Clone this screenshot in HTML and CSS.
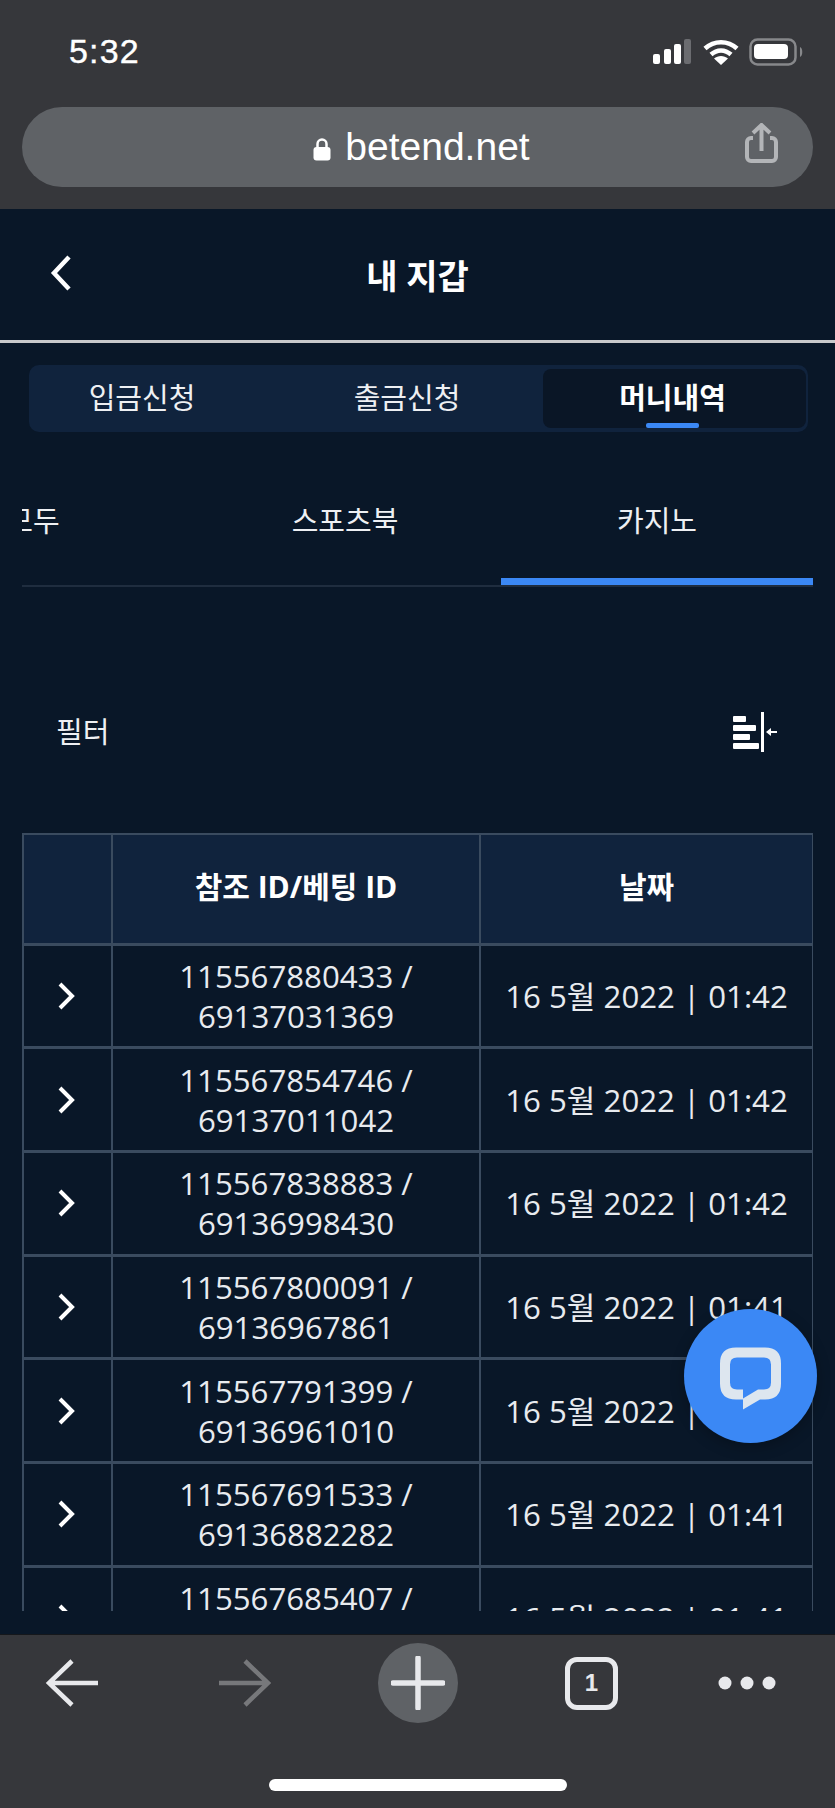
FILE: index.html
```html
<!DOCTYPE html>
<html lang="ko">
<head>
  <meta charset="UTF-8">
  <meta name="viewport" content="width=device-width, initial-scale=1.0">
  <title>내 지갑</title>
  <link rel="stylesheet" href="styles.css">
</head>
<body>
  <div id="phone">
    <div class="browser-top">
      <div class="status-bar">
        <span class="time">5:32</span>
        <div class="status-icons">
          <svg width="40" height="26" viewBox="0 0 40 26">
            <rect x="0" y="15" width="7" height="10" rx="2" fill="#fff"/>
            <rect x="11" y="10" width="7" height="15" rx="2" fill="#fff"/>
            <rect x="21" y="5" width="7" height="20" rx="2" fill="#fff"/>
            <rect x="31" y="0" width="7" height="25" rx="2" fill="#6b6c70"/>
          </svg>
          <svg width="36" height="26" viewBox="0 0 36 26">
            <path d="M2 9.5C11 1 25 1 34 9.5" fill="none" stroke="#fff" stroke-width="4.5"/>
            <path d="M8 15.5C14 10 22 10 28 15.5" fill="none" stroke="#fff" stroke-width="4.5"/>
            <path d="M18 26L11 19.5C15 16 21 16 25 19.5Z" fill="#fff"/>
          </svg>
          <svg width="56" height="28" viewBox="0 0 56 28">
            <rect x="1.5" y="1.5" width="45" height="25" rx="7" fill="none" stroke="#87888b" stroke-width="2.5"/>
            <rect x="5" y="6" width="34" height="15" rx="4" fill="#fff"/>
            <path d="M51 9C54 10 54 18 51 19Z" fill="#87888b"/>
          </svg>
        </div>
      </div>
      <div class="url-pill">
        <div class="url-text">
          <svg width="18" height="24" viewBox="0 0 18 24">
            <path d="M4.5 11V7a4.500 4.500 0 0 1 9 0v4" fill="none" stroke="#fff" stroke-width="2.500"/>
            <rect x="0.500" y="10" width="17" height="13.500" rx="3" fill="#fff"/>
          </svg>
          <span>betend.net</span>
        </div>
        <svg class="share" width="33" height="40" viewBox="0 0 33 40">
          <path d="M8 15H6a4 4 0 0 0-4 4v15a4 4 0 0 0 4 4h21a4 4 0 0 0 4-4V19a4 4 0 0 0-4-4h-2" fill="none" stroke="#b3b5b8" stroke-width="4"/>
          <path d="M16.500 28V3M8 10l8.500-8 8.500 8" fill="none" stroke="#b3b5b8" stroke-width="4"/>
        </svg>
      </div>
    </div>

    <div class="page">
      <div class="page-header">
        <svg class="back" width="22" height="36" viewBox="0 0 22 36">
          <path d="M19 2L4 18l15 16" fill="none" stroke="#fff" stroke-width="4.500"/>
        </svg>
        <h1>내 지갑</h1>
      </div>

      <div class="wallet-tabs">
        <div class="wallet-tab first">입금신청</div>
        <div class="wallet-tab second">출금신청</div>
        <div class="wallet-tab active">머니내역</div>
      </div>

      <div class="sub-tabs">
        <div class="sub-tabs-inner">
          <div class="sub-tab">모두</div>
          <div class="sub-tab">스포츠북</div>
          <div class="sub-tab active">카지노</div>
        </div>
      </div>

      <div class="filter-row">
        <span>필터</span>
        <svg class="filter-icon" width="44" height="40" viewBox="0 0 44 40">
          <rect x="0" y="4" width="13" height="6" rx="1" fill="#fff"/>
          <rect x="0" y="13" width="23" height="6" rx="1" fill="#fff"/>
          <rect x="0" y="22" width="17" height="6" rx="1" fill="#fff"/>
          <rect x="0" y="31" width="26" height="6" rx="1" fill="#fff"/>
          <rect x="28" y="0" width="3" height="40" fill="#fff"/>
          <path d="M44 20H37" stroke="#fff" stroke-width="2"/>
          <path d="M33 20l5-4v8z" fill="#fff"/>
        </svg>
      </div>

      <div class="table-wrap">
        <table class="bets">
          <thead>
            <tr>
              <th class="col-arrow"></th>
              <th class="col-id">참조 ID/베팅 ID</th>
              <th class="col-date">날짜</th>
            </tr>
          </thead>
          <tbody>
            <tr>
              <td><svg class="chev" width="18" height="28" viewBox="0 0 18 28"><path d="M3 2l12 12L3 26" fill="none" stroke="#fff" stroke-width="4"/></svg></td>
              <td>115567880433 /<br>69137031369</td>
              <td>16 5월 2022 | 01:42</td>
            </tr>
            <tr>
              <td><svg class="chev" width="18" height="28" viewBox="0 0 18 28"><path d="M3 2l12 12L3 26" fill="none" stroke="#fff" stroke-width="4"/></svg></td>
              <td>115567854746 /<br>69137011042</td>
              <td>16 5월 2022 | 01:42</td>
            </tr>
            <tr>
              <td><svg class="chev" width="18" height="28" viewBox="0 0 18 28"><path d="M3 2l12 12L3 26" fill="none" stroke="#fff" stroke-width="4"/></svg></td>
              <td>115567838883 /<br>69136998430</td>
              <td>16 5월 2022 | 01:42</td>
            </tr>
            <tr>
              <td><svg class="chev" width="18" height="28" viewBox="0 0 18 28"><path d="M3 2l12 12L3 26" fill="none" stroke="#fff" stroke-width="4"/></svg></td>
              <td>115567800091 /<br>69136967861</td>
              <td>16 5월 2022 | 01:41</td>
            </tr>
            <tr>
              <td><svg class="chev" width="18" height="28" viewBox="0 0 18 28"><path d="M3 2l12 12L3 26" fill="none" stroke="#fff" stroke-width="4"/></svg></td>
              <td>115567791399 /<br>69136961010</td>
              <td>16 5월 2022 | 01:41</td>
            </tr>
            <tr>
              <td><svg class="chev" width="18" height="28" viewBox="0 0 18 28"><path d="M3 2l12 12L3 26" fill="none" stroke="#fff" stroke-width="4"/></svg></td>
              <td>115567691533 /<br>69136882282</td>
              <td>16 5월 2022 | 01:41</td>
            </tr>
            <tr>
              <td><svg class="chev" width="18" height="28" viewBox="0 0 18 28"><path d="M3 2l12 12L3 26" fill="none" stroke="#fff" stroke-width="4"/></svg></td>
              <td>115567685407 /<br>69136877590</td>
              <td>16 5월 2022 | 01:41</td>
            </tr>
          </tbody>
        </table>
      </div>

      <div class="chat-fab">
        <svg width="133" height="133" viewBox="0 0 133 132">
          <path fill-rule="evenodd" fill="#dde6ef" d="M52 38H81Q97 38 97 54V74Q97 90 81 90H76L59 100V90H52Q36 90 36 74V54Q36 38 52 38ZM53 48Q46 48 46 55V73Q46 80 53 80H59V89L74 80H80Q87 80 87 73V55Q87 48 80 48Z"/>
        </svg>
      </div>
    </div>

    <div class="browser-bottom">
      <div class="toolbar">
        <svg width="54" height="48" viewBox="0 0 54 48">
          <path d="M53 24H4M27 2L4 24l23 22" fill="none" stroke="#e8e9ec" stroke-width="4.500"/>
        </svg>
        <svg class="tool-forward" width="54" height="48" viewBox="0 0 54 48">
          <path d="M1 24H50M27 2l23 22-23 22" fill="none" stroke="#77787b" stroke-width="4.500"/>
        </svg>
        <div class="plus-btn">
          <svg width="54" height="54" viewBox="0 0 54 54">
            <path d="M27 2V52M2 27H52" fill="none" stroke="#e8e9ec" stroke-width="5.500" stroke-linecap="round"/>
          </svg>
        </div>
        <div class="tab-count">1</div>
        <svg class="tool-more" width="58" height="14" viewBox="0 0 58 14">
          <circle cx="7" cy="7" r="6.500" fill="#e8e9ec"/>
          <circle cx="29" cy="7" r="6.500" fill="#e8e9ec"/>
          <circle cx="51" cy="7" r="6.500" fill="#e8e9ec"/>
        </svg>
      </div>
      <div class="home-bar"></div>
    </div>
  </div>
</body>
</html>
```

FILE: styles.css
```css
* {
  box-sizing: border-box;
}

body {
  margin: 0;
  background-color: #091728;
  color: #fff;
  font-family: 'Open Sans', 'Noto Sans CJK KR', sans-serif;
}

#phone {
  width: 835px;
  height: 1808px;
  display: flex;
  flex-direction: column;
  overflow: hidden;
}

/* browser chrome */
.browser-top {
  height: 209px;
  background-color: #36373b;
  padding: 0 22px;
}

.status-bar {
  height: 107px;
  display: flex;
  justify-content: space-between;
  align-items: flex-start;
  padding: 32px 0 0 47px;
}

.time {
  font-family: 'Liberation Sans', sans-serif;
  font-size: 34px;
  line-height: 38px;
  font-weight: 400;
  letter-spacing: 1.2px;
  -webkit-text-stroke: 0.4px #fff;
}

.status-icons {
  display: flex;
  align-items: center;
  gap: 10px;
  margin-right: 8px;
  padding-top: 6px;
}

.url-pill {
  position: relative;
  height: 80px;
  border-radius: 40px;
  background-color: #5f6266;
  display: flex;
  justify-content: center;
  align-items: center;
}

.url-text {
  display: flex;
  align-items: center;
  gap: 14px;
  padding-left: 8px;
  font-family: 'Liberation Sans', sans-serif;
  font-size: 39px;
}

.url-text svg {
  margin-top: 4px;
}

.share {
  position: absolute;
  right: 35px;
  top: 16px;
}

/* page */
.page {
  position: relative;
  flex: 1;
  background-color: #091728;
}

.page-header {
  height: 134px;
  border-bottom: 3px solid #c8c9cb;
  display: flex;
  justify-content: center;
  align-items: center;
  position: relative;
}

.page-header h1 {
  margin: 0;
  padding-bottom: 1px;
  font-size: 34px;
  font-weight: 700;
}

.back {
  position: absolute;
  left: 50px;
  top: 46px;
}

.wallet-tabs {
  display: flex;
  margin: 22px 27px 0 29px;
  height: 67px;
  padding: 4px 2px 4px 0;
  background-color: #10233d;
  border-radius: 10px;
}

.wallet-tab {
  display: flex;
  justify-content: center;
  align-items: center;
  font-size: 29px;
  padding-bottom: 6px;
  color: #eef0f3;
}

.wallet-tab.first {
  flex: 0 0 226px;
}

.wallet-tab.second {
  flex: 1;
  padding-left: 16px;
}

.wallet-tab.active {
  position: relative;
  flex: 0 0 263px;
  padding-right: 4px;
  background-color: #0a1626;
  border-radius: 8px;
  font-weight: 700;
  color: #fff;
}

.wallet-tab.active::after {
  content: '';
  position: absolute;
  left: 103px;
  bottom: 0;
  width: 53px;
  height: 5px;
  border-radius: 2px;
  background-color: #3b88f5;
}

.sub-tabs {
  margin: 0 22px;
  height: 155px;
  overflow: hidden;
  border-bottom: 2px solid #1f2d3f;
}

.sub-tabs-inner {
  display: flex;
  margin-left: -145px;
  height: 153px;
}

.sub-tab {
  flex: 0 0 312px;
  padding-top: 64px;
  text-align: center;
  font-size: 29px;
  line-height: 50px;
  color: #eef0f3;
}

.sub-tab.active {
  border-bottom: 7px solid #3b88f5;
}

.filter-row {
  margin: 0 58px 0 56px;
  height: 246px;
  padding-top: 124px;
  display: flex;
  justify-content: space-between;
  align-items: flex-start;
  font-size: 29px;
  line-height: 42px;
  color: #eef0f3;
}

.filter-icon {
  margin-top: 1px;
}

.table-wrap {
  margin: 0 22px;
  height: 778px;
  overflow: hidden;
}

.bets {
  width: 790px;
  table-layout: fixed;
  border-collapse: collapse;
  text-align: center;
  font-size: 31.2px;
  font-weight: 400;
  line-height: 40px;
}

.bets th,
.bets td {
  border-style: solid;
  border-color: #3a4b5f;
  border-width: 3px 2.5px;
  padding: 0;
}

.bets th {
  height: 110px;
  border-width: 2px;
  background-color: #10233d;
  font-size: 30px;
  font-weight: 700;
  padding-bottom: 4px;
}

.bets td {
  height: 103.7px;
  color: #e8ebef;
}

.col-arrow {
  width: 89px;
}

.col-id {
  width: 368px;
}

.col-date {
  width: 333px;
}

.chev {
  display: block;
  margin: 0 auto;
  position: relative;
  left: -2px;
}

.chat-fab {
  position: absolute;
  left: 684px;
  top: 1100px;
  width: 133px;
  height: 134px;
  border-radius: 50%;
  background-color: #3b88f5;
  box-shadow: 0 4px 14px rgba(0, 0, 0, 0.25);
}

.chat-fab svg {
  display: block;
}

/* bottom bar */
.browser-bottom {
  height: 174px;
  flex: none;
  background-color: #36373b;
  border-top: 1px solid #15171b;
  position: relative;
}

.toolbar {
  display: flex;
  align-items: center;
  height: 80px;
  margin-top: 8px;
  padding-left: 45px;
}

.tool-forward {
  margin-left: 119px;
}

.plus-btn {
  margin-left: 106px;
  width: 80px;
  height: 80px;
  border-radius: 50%;
  background-color: #5f6266;
  display: flex;
  justify-content: center;
  align-items: center;
}

.tab-count {
  margin-left: 107px;
  width: 53px;
  height: 53px;
  border: 5px solid #e8e9ec;
  border-radius: 12px;
  display: flex;
  justify-content: center;
  align-items: center;
  font-family: 'Liberation Sans', sans-serif;
  font-size: 24px;
  font-weight: 700;
  color: #e8e9ec;
}

.tool-more {
  margin-left: 100px;
}

.home-bar {
  position: absolute;
  left: 269px;
  top: 144px;
  width: 298px;
  height: 12px;
  border-radius: 6px;
  background-color: #fff;
}
```
